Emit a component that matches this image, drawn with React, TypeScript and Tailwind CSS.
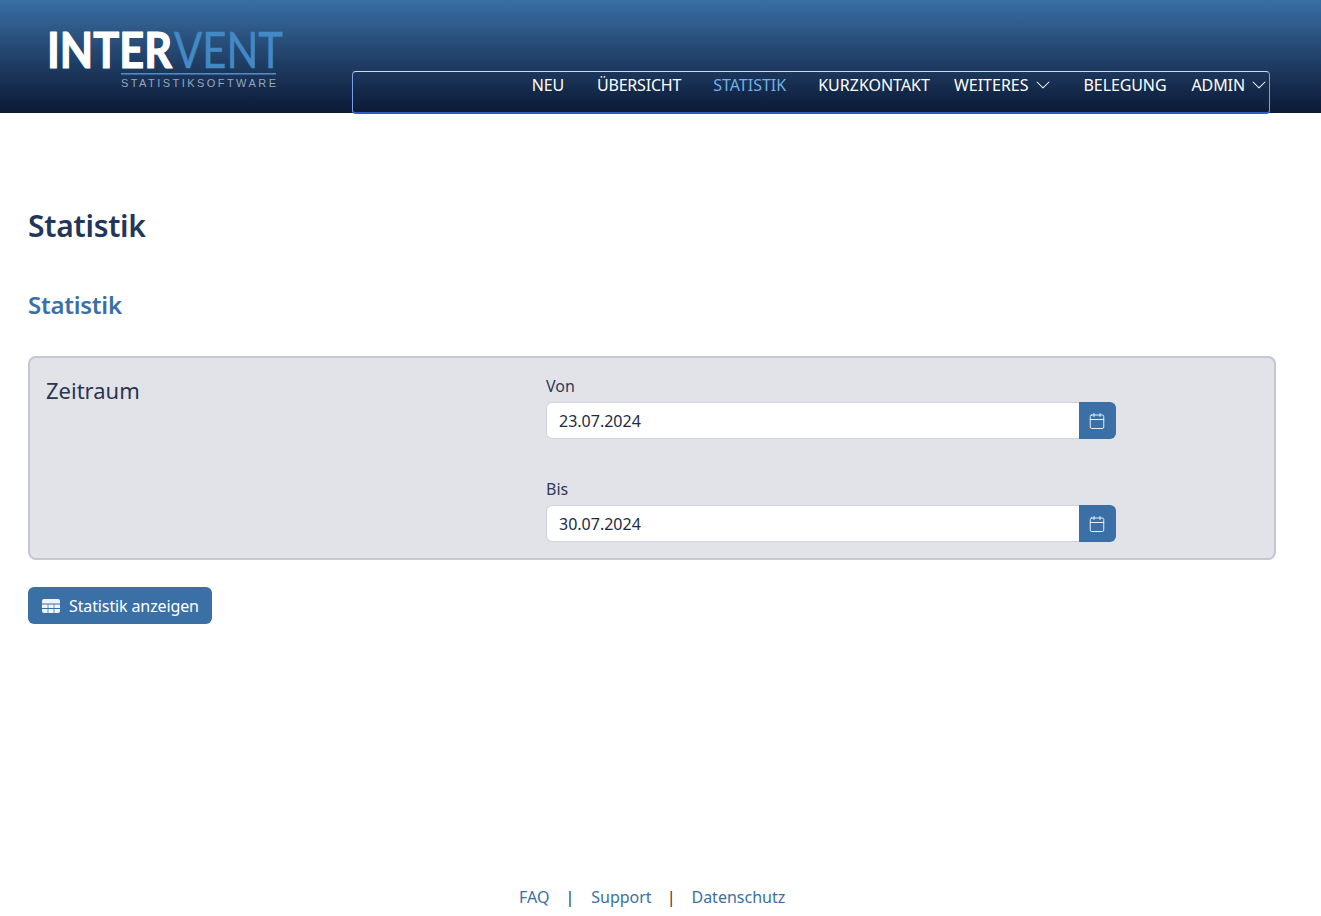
import { Calendar } from "lucide-react";

const font = { fontFamily: '"Noto Sans", sans-serif' };

function Chevron({ className }: { className: string }) {
  return (
    <svg width="16" height="16" viewBox="0 0 16 16" fill="currentColor" className={className}>
      <path fillRule="evenodd" d="M1.646 4.646a.5.5 0 0 1 .708 0L8 10.293l5.646-5.647a.5.5 0 0 1 .708.708l-6 6a.5.5 0 0 1-.708 0l-6-6a.5.5 0 0 1 0-.708z" />
    </svg>
  );
}

function Logo() {
  return (
    <svg width="240" height="68" viewBox="0 0 240 68" className="shrink-0 overflow-visible">
      <text x="-3" y="38" textLength="125" lengthAdjust="spacingAndGlyphs" fill="#ffffff" stroke="#ffffff" strokeWidth="1.2" strokeLinejoin="round" fontFamily="Lato, sans-serif" fontWeight="700" fontSize="50">INTER</text>
      <text x="124" y="38" textLength="109" lengthAdjust="spacingAndGlyphs" fill="#4289c6" stroke="#4289c6" strokeWidth="0.5" fontFamily="Lato, sans-serif" fontWeight="400" fontSize="50">VENT</text>
      <rect x="71" y="43" width="155" height="1.6" fill="#4a8cc4" />
      <text x="71" y="57" textLength="155" fill="#95a6bf" fontFamily="Liberation Sans, sans-serif" fontSize="11">STATISTIKSOFTWARE</text>
    </svg>
  );
}

function DateField({ label, value }: { label: string; value: string }) {
  return (
    <div className="w-[570px]">
      <div className="text-base leading-6 h-[24px] mb-[4px] text-[#2f3a56]">{label}</div>
      <div className="flex h-[37px]">
        <div className="flex-1 bg-white border border-[#ced4da] border-r-0 rounded-l-md pl-[12px] flex items-center text-base text-[#212a45]">{value}</div>
        <div className="w-[37px] bg-[#3a70a5] rounded-r-md flex items-center justify-center pr-[1px]">
          <Calendar size={18} strokeWidth={1.3} className="text-[#eef3f8]" />
        </div>
      </div>
    </div>
  );
}

export default function App() {
  return (
    <div className="min-h-screen flex flex-col bg-white" style={font}>
      <header className="h-[113px] flex bg-gradient-to-b from-[#3a70a5] to-[#0c1a36]">
        <div className="pl-[50px] pt-[30px] w-[352px] shrink-0">
          <Logo />
        </div>
        <nav className="w-[918px] h-[43px] mt-[71px] rounded-[4px] border border-[#7b9fe6] border-t-[#c8d8f5] border-b-2 border-b-[#2f5fc0] flex items-start justify-end pt-[1px] text-base leading-6 text-white">
          <a className="tracking-[-0.2px]">NEU</a>
          <a className="ml-[33px] tracking-[-0.2px]">ÜBERSICHT</a>
          <a className="ml-[32px] text-[#6fb1ea]">STATISTIK</a>
          <a className="ml-[32px]">KURZKONTAKT</a>
          <a className="ml-[24px] flex items-center">WEITERES<Chevron className="ml-[6px]" /></a>
          <a className="ml-[33px] tracking-[-0.1px]">BELEGUNG</a>
          <a className="ml-[25px] flex items-center tracking-[-0.1px]">ADMIN<Chevron className="ml-[6px] mr-[2px]" /></a>
        </nav>
      </header>

      <main className="flex-1 pl-[28px]">
        <h1 className="mt-[92px] text-[30px] leading-[42px] font-semibold text-[#22365a] tracking-[-0.25px]">Statistik</h1>
        <h2 className="mt-[41px] text-[24px] leading-[34px] font-semibold text-[#3a70a5] tracking-[-0.25px]">Statistik</h2>
        <section className="mt-[34px] w-[1248px] h-[204px] bg-[#e2e3e9] border-2 border-[#c4c7d3] rounded-lg flex pl-[16px] pt-[16px]">
          <div className="w-[500px] text-[22px] leading-[34px] text-[#2a3552] -mt-[1px]">Zeitraum</div>
          <div className="flex flex-col gap-[38px]">
            <DateField label="Von" value="23.07.2024" />
            <DateField label="Bis" value="30.07.2024" />
          </div>
        </section>
        <button className="mt-[27px] h-[37px] w-[184px] bg-[#3a70a5] rounded-md text-white text-base tracking-[-0.12px] flex items-center pl-[14px] gap-[9px]">
          <svg width="18" height="14" viewBox="0 0 18 14">
            <rect x="0" y="0" width="18" height="14" rx="2" fill="#eef3f8" />
            <path d="M0 5h18M0 9.500h18" stroke="#3a70a5" strokeWidth="1" />
            <path d="M6 5v9M12 5v9" stroke="#3a70a5" strokeWidth="0.7" />
          </svg>
          Statistik anzeigen
        </button>
      </main>

      <footer className="h-[24px] mb-[7px] flex pl-[519px] text-base leading-6 text-[#3a70a5]">
        <a>FAQ</a>
        <span className="ml-[16px] text-[#2a3552]">|</span>
        <a className="ml-[17px]">Support</a>
        <span className="ml-[15px] text-[#2a3552]">|</span>
        <a className="ml-[16px]">Datenschutz</a>
      </footer>
    </div>
  );
}
